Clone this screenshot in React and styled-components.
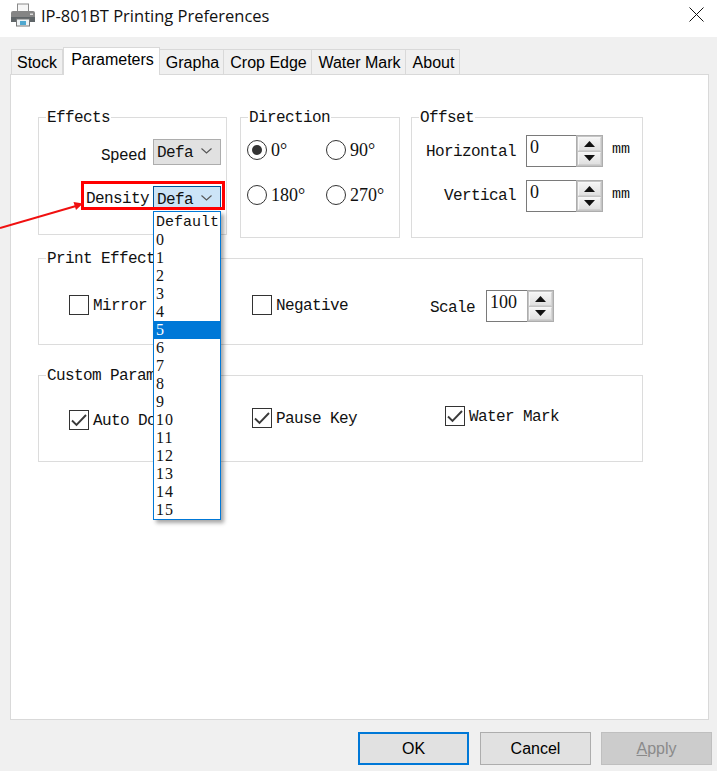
import React from 'react'
import styled, { createGlobalStyle } from 'styled-components'

const GlobalStyle = createGlobalStyle`
	html, body {
		margin: 0;
		padding: 0;
		background: #f0f0f0;
	}

	* {
		box-sizing: border-box;
	}
`

const Page = styled.div`
	position: relative;
	width: 717px;
	height: 771px;
	overflow: hidden;
	display: flex;
	flex-direction: column;
	background: #f0f0f0;
	font-family: "Liberation Sans", Arial, sans-serif;
`

const TitleBar = styled.div`
	height: 37px;
	flex: none;
	display: flex;
	align-items: center;
	background: #fff;
	padding: 0 13px 8px 10px;
`

const Title = styled.div`
	margin: 2px 0 0 5px;
	flex: 1;
	font-family: "Open Sans", sans-serif;
	font-size: 16.5px;
	color: #111;
`

const TabRow = styled.div`
	position: relative;
	z-index: 1;
	height: 28px;
	flex: none;
	display: flex;
	align-items: flex-end;
	margin: 10px 0 -1px 11px;
`

const Tab = styled.div`
	width: ${(p) => p.$width}px;
	height: ${(p) => (p.$active ? 28 : 26)}px;
	padding: ${(p) => (p.$active ? '0 0 3px 2px' : '1px 0 0 2px')};
	display: flex;
	align-items: center;
	justify-content: center;
	font-size: 16px;
	color: #000;
	background: ${(p) => (p.$active ? '#fff' : '#f0f0f0')};
	border: 1px solid #d9d9d9;
	border-left-width: ${(p) => (p.$active ? 1 : 0)}px;
	border-bottom-width: ${(p) => (p.$active ? 0 : 1)}px;

	&:first-child {
		padding-left: 0;
		border-left-width: 1px;
	}
`

const Panel = styled.div`
	width: 699px;
	height: 646px;
	flex: none;
	margin-left: 10px;
	padding: 42px 0 0 27px;
	background: #fff;
	border: 1px solid #d9d9d9;
	font-family: "Liberation Mono", monospace;
	font-size: 16px;
	letter-spacing: -0.6px;
	color: #111;
`

const TopRow = styled.div`
	display: flex;
	align-items: flex-start;
	height: 121px;
	margin-bottom: 20px;
`

const Group = styled.div`
	position: relative;
	width: ${(p) => p.$width}px;
	height: ${(p) => p.$height}px;
	margin-right: ${(p) => p.$gap || 0}px;
	margin-bottom: ${(p) => p.$below || 0}px;
	border: 1px solid #dcdcdc;
`

const Legend = styled.div`
	position: absolute;
	top: -9px;
	left: 7px;
	padding: 0 1px;
	line-height: 18px;
	background: #fff;
	white-space: nowrap;
`

const EffectsBody = styled.div`
	display: flex;
	flex-direction: column;
	gap: 21px;
	padding: 21px 5px 0 0;
`

const FieldRow = styled.div`
	position: relative;
	display: flex;
	justify-content: flex-end;
	align-items: center;
	gap: 4px;
`

const FieldLabel = styled.span`
	margin: ${(p) => p.$top || 0}px ${(p) => p.$right || 0}px 0 0;
`

const Combo = styled.div`
	position: relative;
	width: 68px;
	height: ${(p) => (p.$focused ? 24 : 26)}px;
	display: flex;
	align-items: center;
	justify-content: space-between;
	padding: 0 8px 0 3px;
	background: ${(p) => (p.$focused ? '#cce4f7' : '#e1e1e1')};
	border: 1px solid ${(p) => (p.$focused ? '#005499' : '#adadad')};
`

const ComboText = styled.span`
	margin-top: ${(p) => p.$top || 0}px;
`

const ChevronBox = styled.svg`
	margin-top: ${(p) => p.$top || 0}px;
`

const DropList = styled.div`
	position: absolute;
	z-index: 3;
	top: 24px;
	left: -1px;
	width: 68px;
	padding-top: 1px;
	background: #fff;
	border: 1px solid #0078d7;
	box-shadow: 3px 3px 4px rgba(0, 0, 0, 0.35);
`

const DropItem = styled.div`
	height: 18px;
	padding-left: 2px;
	line-height: ${(p) => (p.$word ? 20 : 18)}px;
	white-space: nowrap;
	font-family: ${(p) => (p.$word ? '"Liberation Mono", monospace' : '"Liberation Serif", serif')};
	font-size: ${(p) => (p.$word ? 15 : 16)}px;
	letter-spacing: ${(p) => (p.$word ? '0' : '1px')};
	color: ${(p) => (p.$selected ? '#fff' : '#111')};
	background: ${(p) => (p.$selected ? '#0078d7' : 'transparent')};
`

const Callout = styled.div`
	position: absolute;
	z-index: 2;
	top: -5px;
	right: -4px;
	width: 144px;
	height: 29px;
	border: 3px solid #f00;
	pointer-events: none;
`

const RadioGrid = styled.div`
	display: grid;
	grid-template-columns: 79px 79px;
	row-gap: 25px;
	padding: 22px 0 0 6px;
`

const RadioItem = styled.div`
	display: flex;
	align-items: center;
	gap: 4px;
	height: 20px;
`

const RadioText = styled.span`
	font-family: "Liberation Serif", serif;
	font-size: 18px;
	letter-spacing: 0;
`

const RadioCircle = styled.div`
	width: 20px;
	height: 20px;
	display: flex;
	align-items: center;
	justify-content: center;
	border: 1px solid #333;
	border-radius: 50%;
	background: #fff;

	&::after {
		content: '';
		display: ${(p) => (p.$on ? 'block' : 'none')};
		width: 10px;
		height: 10px;
		border-radius: 50%;
		background: #333;
	}
`

const OffsetGrid = styled.div`
	display: grid;
	grid-template-columns: 104px 77px auto;
	column-gap: 10px;
	row-gap: 13px;
	align-items: center;
	padding-top: 17px;
`

const RightLabel = styled.div`
	text-align: right;
	margin-top: ${(p) => p.$top || 0}px;
`

const Unit = styled.div`
	margin: -3px 0 0 -1px;
	font-size: 15px;
	letter-spacing: 0;
`

const Spin = styled.div`
	width: ${(p) => p.$width || 77}px;
	height: 32px;
	display: flex;
`

const SpinValue = styled.div`
	flex: 1;
	padding: 1px 0 0 3px;
	line-height: 20px;
	font-family: "Liberation Serif", serif;
	font-size: 18px;
	letter-spacing: 0;
	background: #fff;
	border: 1px solid #7a7a7a;
	border-right: 0;
`

const SpinButtons = styled.div`
	width: 27px;
	display: flex;
	flex-direction: column;
	gap: 1px;
	padding: 1px;
	background: #c4c4c4;
	border: 1px solid #adadad;
`

const SpinButton = styled.div`
	flex: 1;
	display: flex;
	align-items: center;
	justify-content: center;
	background: linear-gradient(#f4f4f4, #e0e0e0);
	border: 1px solid #fff;
	border-color: #f7f7f7 #d5d5d5 #d0d0d0 #f7f7f7;
`

const OptionRow = styled.div`
	display: flex;
	align-items: flex-start;
	padding-left: 30px;
`

const CheckItem = styled.div`
	width: ${(p) => p.$width}px;
	margin-top: ${(p) => p.$top}px;
	display: flex;
	align-items: center;
	gap: 4px;
	height: 20px;
	white-space: nowrap;
`

const CheckLabel = styled.span`
	padding-top: 2px;
`

const CheckBox = styled.div`
	width: 20px;
	height: 20px;
	flex: none;
	display: flex;
	align-items: center;
	justify-content: center;
	border: 1px solid #333;
	background: #fff;
`

const ScaleField = styled.div`
	display: flex;
	align-items: center;
	gap: 11px;
	margin-top: 31px;
`

const ScaleLabel = styled.span`
	padding-top: 3px;
`

const Footer = styled.div`
	display: flex;
	justify-content: flex-end;
	gap: 10px;
	padding: 12px 5px 0 0;
`

const Button = styled.div`
	width: 111px;
	height: 33px;
	margin-right: ${(p) => (p.$primary ? 1 : 0)}px;
	display: flex;
	align-items: center;
	justify-content: center;
	font-size: 16px;
	color: ${(p) => (p.$disabled ? '#8a8a8a' : '#000')};
	background: ${(p) => (p.$disabled ? '#cccccc' : '#e1e1e1')};
	border: ${(p) => (p.$primary ? '2px solid #0078d7' : p.$disabled ? '1px solid #bfbfbf' : '1px solid #adadad')};

	u {
		text-decoration-thickness: 1px;
	}
`

const ArrowLayer = styled.svg`
	position: absolute;
	z-index: 4;
	left: 0;
	top: 190px;
	pointer-events: none;
`

const PrinterIcon = () => (
	<svg width="26" height="26" viewBox="0 0 26 26">
		<rect x="7.5" y="2" width="11" height="8" fill="#f6f6f6" stroke="#8a8a8a" />
		<path d="M3 9h20a2 2 0 0 1 2 2v9H1v-9a2 2 0 0 1 2-2z" fill="#858585" />
		<rect x="1" y="15" width="24" height="5" fill="#5f6568" />
		<rect x="6.5" y="17" width="13" height="7" fill="#eef3f5" stroke="#777" />
		<rect x="10" y="19" width="6" height="4" fill="#4fa8d0" />
		<rect x="20" y="11.5" width="3" height="1.5" fill="#dcdcdc" />
	</svg>
)

const CloseIcon = () => (
	<svg width="15" height="15" viewBox="0 0 15 15">
		<path d="M0.5 0.5L14.5 14.5M14.5 0.5L0.5 14.5" stroke="#111" strokeWidth="1" fill="none" />
	</svg>
)

const Chevron = ({ top }) => (
	<ChevronBox $top={top} width="11" height="6" viewBox="0 0 11 6">
		<path d="M0.5 0.5L5.5 5L10.5 0.5" stroke="#555" strokeWidth="1.1" fill="none" />
	</ChevronBox>
)

const Tick = () => (
	<svg width="18" height="18" viewBox="0 0 18 18">
		<path d="M2 9.5L6.5 14L16 4" stroke="#3a3a3a" strokeWidth="1.9" fill="none" />
	</svg>
)

const SpinBox = ({ value, width }) => (
	<Spin $width={width}>
		<SpinValue>{value}</SpinValue>
		<SpinButtons>
			<SpinButton>
				<svg width="11" height="6" viewBox="0 0 11 6">
					<path d="M5.5 0L11 6H0z" fill="#111" />
				</svg>
			</SpinButton>
			<SpinButton>
				<svg width="11" height="6" viewBox="0 0 11 6">
					<path d="M0 0H11L5.5 6z" fill="#111" />
				</svg>
			</SpinButton>
		</SpinButtons>
	</Spin>
)

const Radio = ({ label, on }) => (
	<RadioItem>
		<RadioCircle $on={on} />
		<RadioText>{label}</RadioText>
	</RadioItem>
)

const Check = ({ label, on, width, top }) => (
	<CheckItem $width={width} $top={top}>
		<CheckBox>{on && <Tick />}</CheckBox>
		<CheckLabel>{label}</CheckLabel>
	</CheckItem>
)

const tabs = [
	{ name: 'Stock', width: 52 },
	{ name: 'Parameters', width: 97 },
	{ name: 'Grapha', width: 64 },
	{ name: 'Crop Edge', width: 88 },
	{ name: 'Water Mark', width: 94 },
	{ name: 'About', width: 54 },
]
const densities = ['Default', '0', '1', '2', '3', '4', '5', '6', '7', '8', '9', '10', '11', '12', '13', '14', '15']

const App = () => {
	return (
		<Page>
			<GlobalStyle />
			<TitleBar>
				<PrinterIcon />
				<Title>IP-801BT Printing Preferences</Title>
				<CloseIcon />
			</TitleBar>

			<TabRow>
				{tabs.map((tab) => (
					<Tab key={tab.name} $width={tab.width} $active={tab.name === 'Parameters'}>
						{tab.name}
					</Tab>
				))}
			</TabRow>

			<Panel>
				<TopRow>
					<Group $width={189} $height={118} $gap={13}>
						<Legend>Effects</Legend>
						<EffectsBody>
							<FieldRow>
								<FieldLabel $top={8} $right={3}>Speed</FieldLabel>
								<Combo>
									<ComboText $top={2}>Defa</ComboText>
									<Chevron top={-3} />
								</Combo>
							</FieldRow>
							<FieldRow>
								<FieldLabel $top={2}>Density</FieldLabel>
								<Combo $focused>
									<ComboText $top={3}>Defa</ComboText>
									<Chevron />
									<DropList>
										{densities.map((d) => (
											<DropItem key={d} $word={d === 'Default'} $selected={d === '5'}>
												{d}
											</DropItem>
										))}
									</DropList>
								</Combo>
								<Callout />
							</FieldRow>
						</EffectsBody>
					</Group>

					<Group $width={160} $height={121} $gap={11}>
						<Legend>Direction</Legend>
						<RadioGrid>
							<Radio label="0°" on />
							<Radio label="90°" />
							<Radio label="180°" />
							<Radio label="270°" />
						</RadioGrid>
					</Group>

					<Group $width={232} $height={121}>
						<Legend>Offset</Legend>
						<OffsetGrid>
							<RightLabel $top={2}>Horizontal</RightLabel>
							<SpinBox value="0" />
							<Unit>mm</Unit>
							<RightLabel>Vertical</RightLabel>
							<SpinBox value="0" />
							<Unit>mm</Unit>
						</OffsetGrid>
					</Group>
				</TopRow>

				<Group $width={605} $height={87} $below={30}>
					<Legend>Print Effect</Legend>
					<OptionRow>
						<Check label="Mirror" width={183} top={36} />
						<Check label="Negative" width={178} top={36} />
						<ScaleField>
							<ScaleLabel>Scale</ScaleLabel>
							<SpinBox value="100" width={68} />
						</ScaleField>
					</OptionRow>
				</Group>

				<Group $width={605} $height={87}>
					<Legend>Custom Param</Legend>
					<OptionRow>
						<Check label="Auto Do" on width={183} top={34} />
						<Check label="Pause Key" on width={193} top={32} />
						<Check label="Water Mark" on width={140} top={30} />
					</OptionRow>
				</Group>
			</Panel>

			<Footer>
				<Button $primary>OK</Button>
				<Button>Cancel</Button>
				<Button $disabled>
					<span>
						<u>A</u>pply
					</span>
				</Button>
			</Footer>

			<ArrowLayer width="92" height="50" viewBox="0 0 92 50">
				<path d="M0 38L76 16" stroke="#f01010" strokeWidth="2" fill="none" />
				<path d="M83 13.5L73.5 12L76 20z" fill="#f01010" />
			</ArrowLayer>
		</Page>
	)
}

export default App
